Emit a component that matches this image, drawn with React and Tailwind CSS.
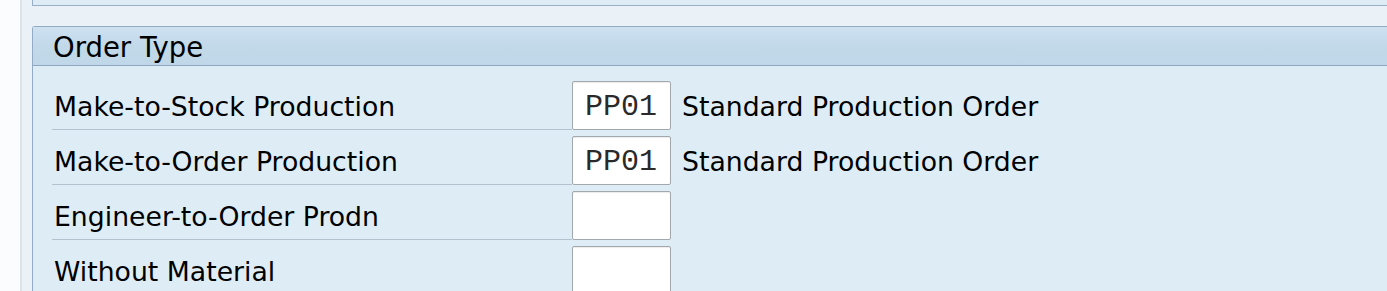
const rows = [
  { label: 'Make-to-Stock Production', value: 'PP01', text: 'Standard Production Order' },
  { label: 'Make-to-Order Production', value: 'PP01', text: 'Standard Production Order' },
  { label: 'Engineer-to-Order Prodn', value: '', text: '' },
  { label: 'Without Material', value: '', text: '' },
]

const sans = { fontFamily: '"DejaVu Sans", Tahoma, sans-serif' }

function FieldRow({ label, value, text }) {
  return (
    <div className="flex h-[49px] mb-[6px] items-stretch">
      <div className="w-[520px] shrink-0 border-b border-[#b4c2cf] flex items-center pl-[2px] text-[26.7px] text-black leading-none">
        <span className="pt-[4px]">{label}</span>
      </div>
      <div className="w-[99px] shrink-0 bg-white border border-[#a3a8ad] rounded-[2px] shadow-[inset_0_1px_1px_rgba(0,0,0,0.08)] flex items-center pl-[12px]">
        <span className="font-['Liberation_Mono',monospace] text-[30px] text-[#2a2a2a] leading-none pt-[2px]">{value}</span>
      </div>
      {text && (
        <div className="flex items-center pl-[11px] text-[26.7px] text-black leading-none">
          <span className="pt-[4px]">{text}</span>
        </div>
      )}
    </div>
  )
}

export default function App() {
  return (
    <div className="flex h-[291px] w-[1387px] overflow-hidden bg-[#fbfcfd]" style={sans}>
      {/* left gutter */}
      <div className="w-[20px] shrink-0 bg-[#fbfcfd]" />
      <div className="w-[2px] shrink-0 bg-[#dce4eb]" />

      <div className="flex-1 bg-[#eaf2f7] pl-[10px] flex flex-col">
        {/* bottom of previous panel */}
        <div className="h-[6px] shrink-0 bg-[#ddecf5] border-l border-b border-[#97b0c8]" />

        <div className="h-[20px] shrink-0" />

        {/* Order Type panel */}
        <div className="flex-1 border-t border-l border-[#93acc5] rounded-tl-[3px] bg-[#deedf5] flex flex-col">
          <div className="h-[39px] shrink-0 bg-gradient-to-b from-[#cde1f1] via-[#c2d9e9] to-[#bfd7e8] border-b border-[#8ea8c3] flex items-center pl-[20px] text-[27.5px] text-black leading-none">
            <span className="pt-[3px]">Order Type</span>
          </div>

          <div className="pt-[15px] pl-[19px]">
            {rows.map((r) => (
              <FieldRow key={r.label} {...r} />
            ))}
          </div>
        </div>
      </div>
    </div>
  )
}
